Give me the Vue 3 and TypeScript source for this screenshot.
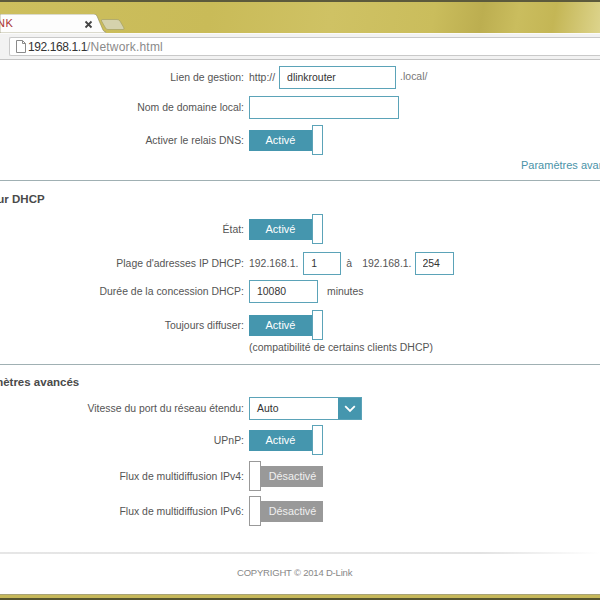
<script setup lang="ts">
const dhcpRows = ['État:']
</script>

<template>
  <div class="screen">
    <header class="titlebar">
      <div class="tab">
        <svg class="tab-shape" width="106" height="19" viewBox="0 0 106 19">
          <path d="M0 0 H94 Q96 0 97 2 L103 16 Q104 18 106 18 V19 H0 Z" fill="#fdfdfd" stroke="#8f8a5c" stroke-width="0.6" />
        </svg>
        <span class="tab-title">nk</span>
        <svg class="tab-close" width="9" height="9" viewBox="0 0 9 9">
          <path d="M1.5 1.5 L7.5 7.5 M7.5 1.5 L1.5 7.5" stroke="#444" stroke-width="1.8" />
        </svg>
      </div>
      <svg class="new-tab" width="24" height="11" viewBox="0 0 24 11">
        <path d="M1 .5 H16 Q18 .5 19 2 L23 9 Q23.5 10.5 22 10.5 H7 Q5 10.5 4.5 9 L.5 2 Q0 .5 1 .5 Z" fill="#d5d2ad" stroke="#a9a468" stroke-width="0.8" />
      </svg>
    </header>
    <div class="toolbar">
      <div class="omnibox">
        <svg class="page-icon" width="10" height="13" viewBox="0 0 10 13">
          <path d="M.5 .5 H6.5 L9.5 3.5 V12.5 H.5 Z M6.5 .5 V3.5 H9.5" fill="#fff" stroke="#8a8a8a" />
        </svg>
        <span class="url"><span class="host">192.168.1.1</span>/Network.html</span>
      </div>
    </div>

    <main class="page">
      <div class="row r1">
        <label>Lien de gestion:</label>
        <span class="prefix">http://</span>
        <input class="field w117" value="dlinkrouter" />
        <span class="suffix">.local/</span>
      </div>
      <div class="row r2">
        <label>Nom de domaine local:</label>
        <input class="field w150" value="" />
      </div>
      <div class="row r3">
        <label>Activer le relais DNS:</label>
        <div class="toggle"><span class="on">Activé</span><span class="knob"></span></div>
      </div>
      <div class="adv-link">Paramètres avancés</div>
      <hr class="rule first" />

      <h2 class="title dhcp">Serveur DHCP</h2>
      <div class="row r-state">
        <label>{{ dhcpRows[0] }}</label>
        <div class="toggle"><span class="on">Activé</span><span class="knob"></span></div>
      </div>
      <div class="row r-range">
        <label>Plage d'adresses IP DHCP:</label>
        <span class="prefix">192.168.1.</span>
        <input class="field w38" value="1" />
        <span class="to">à</span>
        <span class="prefix last">192.168.1.</span>
        <input class="field w39" value="254" />
      </div>
      <div class="row r-lease">
        <label>Durée de la concession DHCP:</label>
        <input class="field w69" value="10080" />
        <span class="unit">minutes</span>
      </div>
      <div class="row r-always">
        <label>Toujours diffuser:</label>
        <div class="toggle"><span class="on">Activé</span><span class="knob"></span></div>
      </div>
      <div class="note">(compatibilité de certains clients DHCP)</div>
      <hr class="rule second" />

      <h2 class="title adv">Paramètres avancés</h2>
      <div class="row r-speed">
        <label>Vitesse du port du réseau étendu:</label>
        <div class="select">
          <span class="select-value">Auto</span>
          <span class="select-btn">
            <svg width="12" height="8" viewBox="0 0 12 8"><path d="M1.2 1.2 L6 6 L10.8 1.2" fill="none" stroke="#fff" stroke-width="1.8" /></svg>
          </span>
        </div>
      </div>
      <div class="row r-upnp">
        <label>UPnP:</label>
        <div class="toggle"><span class="on">Activé</span><span class="knob"></span></div>
      </div>
      <div class="row r-v4">
        <label>Flux de multidiffusion IPv4:</label>
        <div class="toggle"><span class="knob off-knob"></span><span class="off">Désactivé</span></div>
      </div>
      <div class="row r-v6">
        <label>Flux de multidiffusion IPv6:</label>
        <div class="toggle"><span class="knob off-knob"></span><span class="off">Désactivé</span></div>
      </div>
      <div class="foot-rule"></div>
      <footer class="copy">COPYRIGHT © 2014 D-Link</footer>
    </main>
    <div class="frame-bottom"></div>
  </div>
</template>

<style>
html, body { margin: 0; background: #fff; }
</style>

<style scoped>
.screen {
  width: 600px;
  height: 600px;
  overflow: hidden;
  display: flex;
  flex-direction: column;
  font-family: "Liberation Sans", Arial, sans-serif;
  font-size: 10.45px;
  color: #555;
  background: #fff;
}
.titlebar {
  height: 33px;
  box-sizing: border-box;
  border-top: 2px solid #5c5a3c;
  background: linear-gradient(100deg, #cdbf5e 0%, #c9bb58 35%, #cfc264 55%, #cabd5c 72%, #bcae50 80%, #cabd5e 86%, #c4b655 92%, #ddd48c 100%);
  display: flex;
  align-items: flex-end;
  flex: none;
}
.tab {
  position: relative;
  width: 106px;
  height: 19px;
  flex: none;
}
.tab-shape { position: absolute; left: 0; top: 0; }
.tab-title { position: absolute; left: -3px; top: 3px; font-size: 11px; color: #a33; letter-spacing: .5px; text-transform: uppercase; }
.tab-close { position: absolute; left: 84px; top: 6px; }
.new-tab { margin: 0 0 3px -5px; }
.toolbar {
  height: 27px;
  flex: none;
  box-sizing: border-box;
  padding: 3px 0 4px 9px;
  background: #f2f2f2;
  border-top: 1px solid #fbfbfb;
  border-bottom: 1px solid #c4c4c4;
}
.omnibox {
  height: 19px;
  box-sizing: border-box;
  background: #fff;
  border: 1px solid #c9c9c9;
  border-right: 0;
  border-radius: 2px 0 0 2px;
  display: flex;
  align-items: center;
  padding-left: 5px;
  gap: 2px;
}
.page-icon { flex: none; margin-left: 1px; }
.url { font-size: 12px; letter-spacing: .2px; color: #8a8a8a; }
.host { color: #333; letter-spacing: -.4px; }
.page {
  flex: 1;
  display: flex;
  flex-direction: column;
  min-height: 0;
}
.row {
  display: flex;
  align-items: center;
  flex: none;
}
.row label {
  width: 244px;
  text-align: right;
  margin-right: 5px;
  flex: none;
}
.r1 { height: 23px; margin-top: 6px; }
.r2 { height: 23px; margin-top: 7px; }
.r3 { height: 30px; margin-top: 6px; }
.prefix { margin-right: 4px; }
.suffix { margin-left: 4px; margin-top: -3px; color: #777; }
.field {
  height: 23px;
  box-sizing: border-box;
  border: 1px solid #5ba3b8;
  background: #fff;
  padding: 0 7px;
  font: 10.45px "Liberation Sans", Arial, sans-serif;
  color: #333;
  outline: none;
  flex: none;
  margin: 0;
}
.w117 { width: 117px; }
.w150 { width: 150px; }
.w38 { width: 38px; }
.w39 { width: 39px; }
.w69 { width: 69px; }
.toggle {
  display: flex;
  align-items: center;
  height: 30px;
  width: 74px;
  position: relative;
}
.on, .off {
  display: flex;
  align-items: center;
  justify-content: center;
  height: 21px;
  color: #fff;
  font-size: 11px;
}
.on { width: 63px; background: #4596ae; padding-right: 0; }
.off { width: 61px; padding-left: 2px; font-size: 10.8px; background: #999; margin-left: -1px; color: #f0f0f0; }
.knob {
  width: 11px;
  height: 30px;
  box-sizing: border-box;
  background: #fff;
  border: 1px solid #5ba3b8;
  flex: none;
}
.off-knob { width: 12px; border-color: #999; position: relative; }
.adv-link {
  height: 14px;
  line-height: 14px;
  margin-top: 3px;
  padding-left: 521px;
  white-space: nowrap;
  color: #4a93a8;
  font-size: 11px;
  flex: none;
}
.rule {
  height: 1px;
  border: 0;
  margin: 0;
  background: #a0b0b3;
  flex: none;
}
.first { margin-top: 8px; }
.title {
  margin: 0;
  font-size: 11.5px;
  font-weight: bold;
  line-height: 14px;
  color: #4a4a4a;
  white-space: nowrap;
  flex: none;
}
.dhcp { margin: 11px 0 0 -34px; }
.adv { margin: 10px 0 0 -32px; }
.r-state { height: 30px; margin-top: 8px; }
.r-range { height: 23px; margin-top: 8px; }
.to { margin: 0 10px 0 5px; }
.r-range .prefix { margin-right: 5px; }
.r-range .prefix.last { margin-right: 3px; }
.r-lease { height: 23px; margin-top: 5px; }
.unit { margin-left: 9px; margin-top: -1px; }
.r-always { height: 30px; margin-top: 7px; }
.note { padding-left: 249px; height: 12px; line-height: 12px; margin-top: 2px; flex: none; }
.second { margin-top: 10px; }
.r-speed { height: 23px; margin-top: 8px; }
.select {
  width: 113px;
  height: 23px;
  box-sizing: border-box;
  border: 1px solid #5ba3b8;
  display: flex;
  justify-content: space-between;
  align-items: center;
  color: #333;
}
.select-value { padding-left: 7px; }
.select-btn {
  width: 23px;
  height: 100%;
  background: #4596ae;
  display: flex;
  align-items: center;
  justify-content: center;
}
.r-upnp { height: 30px; margin-top: 5px; }
.r-v4 { height: 30px; margin-top: 6px; }
.r-v6 { height: 30px; margin-top: 5px; }
.foot-rule {
  height: 2px;
  margin-top: 26px;
  flex: none;
  background: linear-gradient(90deg, #e6e6e6, #e2e2e2 80%, #fff);
}
.copy {
  height: 12px;
  line-height: 12px;
  margin-top: 13px;
  padding-left: 237px;
  font-size: 9.5px;
  letter-spacing: -.2px;
  color: #888;
  flex: none;
}
.frame-bottom {
  height: 6px;
  flex: none;
  border-top: 1px solid #a8a274;
  box-sizing: border-box;
  background: linear-gradient(#c6b85a, #c6b85a 60%, #55532f 60%);
}
</style>
